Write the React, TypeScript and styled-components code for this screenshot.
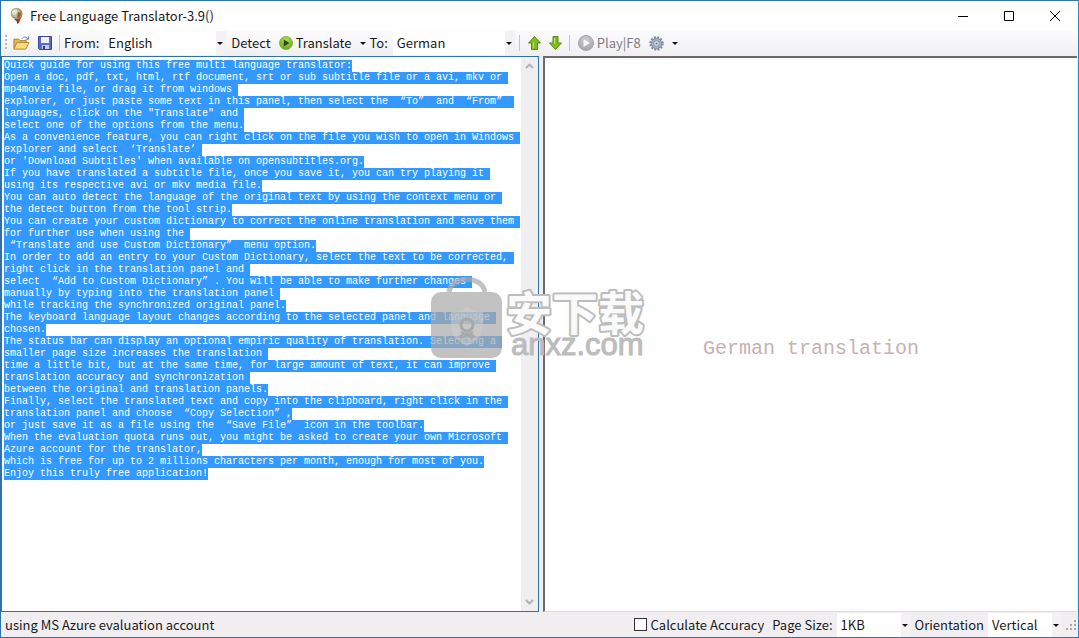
import React from "react";
import styled, { createGlobalStyle, css } from "styled-components";

const GlobalStyle = createGlobalStyle`
  *, *::before, *::after { box-sizing: border-box; }
  html, body, #root { height: 100%; margin: 0; }
  body {
    font-family: "Noto Sans CJK SC", "Noto Sans", sans-serif;
    font-size: 13px;
    line-height: 16px;
    color: #1a1a1a;
    background: #f0eef1;
  }
  button, select, input { font: inherit; color: inherit; margin: 0; }
`;

const Window = styled.main`
  position: relative;
  display: flex;
  flex-direction: column;
  height: 100vh;
  background: #f0eef1;
  border: 1px solid #2f73a6;
  border-right-color: #2a8ad0;
  overflow: hidden;
`;

const TitleBar = styled.header`
  display: flex;
  align-items: center;
  height: 29px;
  padding-left: 8px;
  background: #fff;
`;

const Title = styled.h1`
  flex: 1;
  margin: 0 0 0 5px;
  font-size: 13px;
  font-weight: 400;
`;

const CaptionButton = styled.button`
  display: flex;
  align-items: center;
  justify-content: center;
  width: 46px;
  height: 28px;
  padding: 0;
  border: 0;
  background: transparent;
`;

const Toolbar = styled.div`
  display: flex;
  align-items: center;
  height: 26px;
  padding-left: 4px;
  background: linear-gradient(#fdfcfd, #f0eef1);
`;

const Grip = styled.span`
  width: 2px;
  height: 16px;
  margin-right: 2px;
  background: repeating-linear-gradient(#b9b7bb 0 2px, transparent 2px 4px);
`;

const Separator = styled.span`
  width: 1px;
  height: 16px;
  margin: 0 4px 0 3px;
  background: #c6c4c8;
`;

const ToolButton = styled.button<{ $muted?: boolean }>`
  display: flex;
  align-items: center;
  gap: 3px;
  height: 22px;
  padding: 0 4px;
  border: 0;
  background: transparent;
  ${(p) => p.$muted && css`color: #7d7d80;`}
`;

const FieldLabel = styled.label`
  white-space: nowrap;
`;

const SelectBox = styled.span<{ $width: number; $status?: boolean }>`
  position: relative;
  display: flex;
  width: ${(p) => p.$width}px;
  height: 24px;
  margin: ${(p) => (p.$status ? "0 4px" : "0 1px 0 5px")};
  background: linear-gradient(to right, #fff calc(100% - 10px), #f3f1f4 calc(100% - 10px));

  & > svg {
    position: absolute;
    right: 3px;
    top: 11px;
    pointer-events: none;
  }
`;

const Select = styled.select`
  width: 100%;
  padding: 0 16px 0 4px;
  border: 0;
  background: transparent;
  appearance: none;
  outline: none;
`;

const Panels = styled.div`
  flex: 1;
  display: flex;
  gap: 4px;
  min-height: 0;
  padding-right: 1px;
`;

const SourcePanel = styled.section`
  flex: 538 1 0;
  display: flex;
  min-width: 0;
  background: #fff;
  border: 1px solid #2c73a8;
`;

const SourceText = styled.div`
  flex: 1;
  min-width: 0;
  padding: 3px 2px;
  overflow: hidden;
  font-family: "Liberation Mono", monospace;
  font-size: 10px;
  line-height: 12px;
  outline: none;
`;

const Line = styled.div`
  height: 12px;
  white-space: pre;
`;

const Selected = styled.mark`
  display: inline-block;
  height: 12px;
  color: #fff;
  background: #3399ff;
`;

const WideQuote = styled.span<{ $open: boolean }>`
  display: inline-block;
  width: 12px;
  text-align: ${(p) => (p.$open ? "right" : "left")};
`;

const ScrollTrack = styled.div`
  display: flex;
  flex-direction: column;
  justify-content: space-between;
  width: 17px;
  background: #f0eef1;
`;

const ScrollButton = styled.button`
  display: flex;
  align-items: center;
  justify-content: center;
  height: 18px;
  padding: 0;
  border: 0;
  background: transparent;
`;

const TargetPanel = styled.section`
  flex: 534 1 0;
  display: flex;
  min-width: 0;
  background: #fff;
  border: 2px solid #6d6b6e;
  border-right: 0;
  border-bottom: 1px solid #dddbde;
`;

const TargetText = styled.div`
  flex: 1;
  display: flex;
  align-items: center;
  justify-content: center;
  padding-top: 28px;
  font-family: "Liberation Mono", monospace;
  font-size: 20px;
  line-height: 24px;
  color: #c9b0b2;
  outline: none;
`;

const StatusBar = styled.footer`
  display: flex;
  align-items: center;
  height: 25px;
  padding-left: 4px;
`;

const StatusText = styled.span`
  flex: 1;
`;

const CheckLabel = styled.label`
  display: flex;
  align-items: center;
  gap: 4px;
  margin-right: 8px;
`;

const CheckBox = styled.input`
  appearance: none;
  width: 13px;
  height: 13px;
  border: 1px solid #333;
  background: #fff;
`;

const Watermark = styled.div`
  position: absolute;
  left: 429px;
  top: 273px;
  pointer-events: none;

  & > svg { display: block; }
`;

const Caret = () => (
  <svg width="6" height="3" viewBox="0 0 6 3" aria-hidden="true">
    <path d="M0 0h6L3 3z" fill="#111" />
  </svg>
);

const Chevron = ({ down }: { down?: boolean }) => (
  <svg width="9" height="6" viewBox="0 0 9 6" aria-hidden="true">
    <path d={down ? "M1 1l3.5 3.5L8 1" : "M1 5l3.5-3.5L8 5"} fill="none" stroke="#b4b2b5" strokeWidth="2" />
  </svg>
);

const AppIcon = () => (
  <svg width="16" height="18" viewBox="0 0 16 18" aria-hidden="true">
    <path d="M9 2c4 0 5 4 4 7l-2 4-4 1z" fill="#8a4b2b" />
    <circle cx="7.500" cy="6.500" r="5.700" fill="#b98d58" />
    <circle cx="6.800" cy="6" r="4.400" fill="#9fc7bd" />
    <path d="M3 4l4-2 1.500 3L6 8 3 7z" fill="#ece2bb" />
    <path d="M9 5l3 1-1 4-3 1z" fill="#a5542c" />
    <path d="M5 12l5 0 1 2-3 1z" fill="#7d5a3a" />
    <path d="M8 13l3-1-1 4-2 1z" fill="#b32e22" />
  </svg>
);

const FolderIcon = () => (
  <svg width="17" height="16" viewBox="0 0 18 16" aria-hidden="true">
    <path d="M1 14V4h5l1.500 1.500H14V8" fill="#e8bb52" stroke="#a87a24" />
    <path d="M1 14.500L4 7.500h13L13.500 14.500z" fill="#fbd983" stroke="#b58528" />
    <path d="M9.500 3.500c1.500-2.500 4.500-2.500 6 0M16.500 1v3h-3" fill="none" stroke="#5d7fa8" />
  </svg>
);

const SaveIcon = () => (
  <svg width="14" height="14" viewBox="0 0 14 14" aria-hidden="true">
    <path d="M.5.500h13v13h-12l-1-1z" fill="#5f6cc4" stroke="#3b479c" />
    <path d="M3 1h8v6H3z" fill="#eef1fb" />
    <path d="M4 9h7v4H4z" fill="#c7cbe0" />
    <path d="M5 10h2v3H5z" fill="#2f3a86" />
  </svg>
);

const PlayIcon = ({ size, muted }: { size: number; muted?: boolean }) => (
  <svg width={size} height={size} viewBox="0 0 16 16" aria-hidden="true">
    <defs>
      <radialGradient id={muted ? "playGrey" : "playGreen"} cx="50%" cy="30%" r="70%">
        <stop offset="0" stopColor={muted ? "#cfcfcf" : "#b7e04c"} />
        <stop offset="1" stopColor={muted ? "#a2a2a4" : "#6ba521"} />
      </radialGradient>
    </defs>
    <circle cx="8" cy="8" r="7.500" fill={`url(#${muted ? "playGrey" : "playGreen"})`} stroke={muted ? "#a9a9ab" : "#86b83a"} />
    <path d="M5.500 4l6.500 4-6.500 4z" fill={muted ? "#f4f4f4" : "#27491a"} />
  </svg>
);

const ArrowIcon = ({ down }: { down?: boolean }) => (
  <svg width="13" height="14" viewBox="0 0 13 14" aria-hidden="true">
    <path
      d={down ? "M4 .5h5V7h3.500l-6 6.500L.5 7H4z" : "M3.500 13.500h6V7h3l-6-6.500L.5 7h3z"}
      fill="#83bd1d"
      stroke="#568a14"
    />
    <path d={down ? "M5.500 2v6" : "M5.500 12V6"} stroke="#b9e05c" />
  </svg>
);

const GearIcon = () => (
  <svg width="15" height="15" viewBox="0 0 16 16" aria-hidden="true">
    <circle cx="8" cy="8" r="6.500" fill="none" stroke="#80899f" strokeWidth="2.400" strokeDasharray="2 1.400" />
    <circle cx="8" cy="8" r="5.600" fill="#a7afc2" stroke="#7f89a1" />
    <circle cx="8" cy="8" r="3" fill="#dfe3ec" stroke="#8791a8" />
    <circle cx="8" cy="8" r="1.200" fill="#77819a" />
  </svg>
);

const SizeGrip = () => (
  <svg width="12" height="12" viewBox="0 0 12 12" aria-hidden="true">
    <path d="M8 1h2v2H8zM4 5h2v2H4zM8 5h2v2H8zM0 9h2v2H0zM4 9h2v2H4zM8 9h2v2H8z" fill="#aaa8ac" />
  </svg>
);

const guide = [
  "Quick guide for using this free multi language translator:",
  "Open a doc, pdf, txt, html, rtf document, srt or sub subtitle file or a avi, mkv or ",
  "mp4movie file, or drag it from windows ",
  "explorer, or just paste some text in this panel, then select the “To” and “From” ",
  "languages, click on the \"Translate\" and ",
  "select one of the options from the menu.",
  "As a convenience feature, you can right click on the file you wish to open in Windows ",
  "explorer and select ‘Translate’",
  "or 'Download Subtitles' when available on opensubtitles.org.",
  "If you have translated a subtitle file, once you save it, you can try playing it ",
  "using its respective avi or mkv media file.",
  "You can auto detect the language of the original text by using the context menu or ",
  "the detect button from the tool strip.",
  "You can create your custom dictionary to correct the online translation and save them ",
  "for further use when using the ",
  "“Translate and use Custom Dictionary” menu option.",
  "In order to add an entry to your Custom Dictionary, select the text to be corrected, ",
  "right click in the translation panel and ",
  "select “Add to Custom Dictionary”. You will be able to make further changes ",
  "manually by typing into the translation panel ",
  "while tracking the synchronized original panel.",
  "The keyboard language layout changes according to the selected panel and language ",
  "chosen.",
  "The status bar can display an optional empiric quality of translation. Selecting a ",
  "smaller page size increases the translation ",
  "time a little bit, but at the same time, for large amount of text, it can improve ",
  "translation accuracy and synchronization ",
  "between the original and translation panels.",
  "Finally, select the translated text and copy into the clipboard, right click in the ",
  "translation panel and choose “Copy Selection”,",
  "or just save it as a file using the “Save File” icon in the toolbar.",
  "When the evaluation quota runs out, you might be asked to create your own Microsoft ",
  "Azure account for the translator,",
  "which is free for up to 2 millions characters per month, enough for most of you.",
  "Enjoy this truly free application!",
];

const GuideLine = ({ text }: { text: string }) => (
  <Line>
    <Selected>
      {text.split(/([“”‘’])/).map((part, i) =>
        /^[“”‘’]$/.test(part) ? (
          <WideQuote key={i} $open={part === "“" || part === "‘"}>{part}</WideQuote>
        ) : (
          part
        )
      )}
    </Selected>
  </Line>
);

type DropDownProps = { id: string; width: number; options: string[]; status?: boolean };

const DropDown = ({ id, width, options, status }: DropDownProps) => (
  <SelectBox $width={width} $status={status}>
    <Select id={id} defaultValue={options[0]}>
      {options.map((o) => <option key={o}>{o}</option>)}
    </Select>
    <Caret />
  </SelectBox>
);

const SiteMark = () => (
  <Watermark>
    <svg width="220" height="90" viewBox="0 0 220 90" aria-hidden="true">
      <g opacity="0.7">
        <path d="M19 18C22 1 52 1 55 18" fill="none" stroke="#a9a9a9" strokeWidth="5" />
        <rect x="1" y="18" width="71" height="66" rx="10" fill="#a9a9a9" />
      </g>
      <path d="M21 38q9 0 16-5 7 5 16 5v14q0 13-16 20-16-7-16-20z" fill="#cdcdcd" opacity="0.5" />
      <circle cx="37" cy="51" r="6" fill="none" stroke="#a8a8a8" strokeWidth="3" />
      <path d="M29 63q8-7 16 0M31 58l12 6M43 58l-12 6" fill="none" stroke="#a8a8a8" strokeWidth="2" />
      <text
        x="76"
        y="56"
        fontFamily="'Noto Sans CJK SC', sans-serif"
        fontSize="46"
        fontWeight="700"
        fill="#fafafa"
        stroke="#bdbdbd"
        strokeWidth="4"
        strokeLinejoin="round"
        paintOrder="stroke"
      >
        安下载
      </text>
      <text x="81" y="81" fontFamily="'Liberation Sans', sans-serif" fontSize="31" fill="#bcbcbc" stroke="#bcbcbc">anxz.com</text>
    </svg>
  </Watermark>
);

export default function App() {
  return (
    <>
      <GlobalStyle />
      <Window>
        <TitleBar>
          <AppIcon />
          <Title>Free Language Translator-3.9()</Title>
          <CaptionButton aria-label="Minimize">
            <svg width="10" height="10"><path d="M0 5.500h10" stroke="#000" /></svg>
          </CaptionButton>
          <CaptionButton aria-label="Maximize">
            <svg width="10" height="10"><path d="M.5.500h9v9h-9z" fill="none" stroke="#000" /></svg>
          </CaptionButton>
          <CaptionButton aria-label="Close">
            <svg width="10" height="10"><path d="M0 0l10 10M10 0L0 10" stroke="#000" /></svg>
          </CaptionButton>
        </TitleBar>

        <Toolbar role="toolbar">
          <Grip />
          <ToolButton aria-label="Open"><FolderIcon /></ToolButton>
          <ToolButton aria-label="Save"><SaveIcon /></ToolButton>
          <Separator />
          <FieldLabel htmlFor="from">From:</FieldLabel>
          <DropDown id="from" width={122} options={["English", "German", "French"]} />
          <ToolButton>Detect</ToolButton>
          <ToolButton><PlayIcon size={14} />Translate</ToolButton>
          <ToolButton aria-label="Translate options"><Caret /></ToolButton>
          <FieldLabel htmlFor="to">To:</FieldLabel>
          <DropDown id="to" width={122} options={["German", "English", "French"]} />
          <Separator />
          <ToolButton aria-label="Previous"><ArrowIcon /></ToolButton>
          <ToolButton aria-label="Next"><ArrowIcon down /></ToolButton>
          <Separator />
          <ToolButton $muted><PlayIcon size={16} muted />Play|F8</ToolButton>
          <ToolButton aria-label="Settings"><GearIcon /></ToolButton>
          <ToolButton aria-label="Settings menu"><Caret /></ToolButton>
        </Toolbar>

        <Panels>
          <SourcePanel>
            <SourceText contentEditable suppressContentEditableWarning spellCheck={false} role="textbox" aria-multiline="true" aria-label="Original text">
              {guide.map((text) => <GuideLine key={text} text={text} />)}
            </SourceText>
            <ScrollTrack>
              <ScrollButton aria-label="Scroll up"><Chevron /></ScrollButton>
              <ScrollButton aria-label="Scroll down"><Chevron down /></ScrollButton>
            </ScrollTrack>
          </SourcePanel>
          <TargetPanel>
            <TargetText contentEditable suppressContentEditableWarning spellCheck={false} role="textbox" aria-multiline="true" aria-label="Translated text">
              German translation
            </TargetText>
          </TargetPanel>
        </Panels>

        <StatusBar>
          <StatusText>using MS Azure evaluation account</StatusText>
          <CheckLabel><CheckBox type="checkbox" />Calculate Accuracy</CheckLabel>
          <FieldLabel htmlFor="page-size">Page Size:</FieldLabel>
          <DropDown id="page-size" width={74} options={["1KB", "2KB", "4KB"]} status />
          <FieldLabel htmlFor="orientation">Orientation</FieldLabel>
          <DropDown id="orientation" width={74} options={["Vertical", "Horizontal"]} status />
          <SizeGrip />
        </StatusBar>
        <SiteMark />
      </Window>
    </>
  );
}
